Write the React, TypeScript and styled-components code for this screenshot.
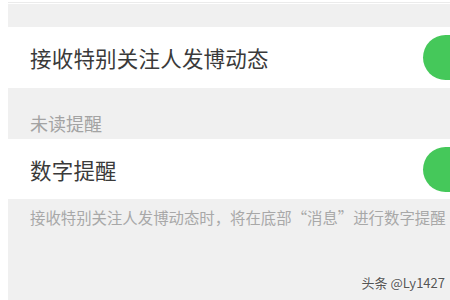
import React from "react";
import styled, { createGlobalStyle } from "styled-components";

const Global = createGlobalStyle`
  html, body {
    margin: 0;
    padding: 0;
    background: #ffffff;
    overflow: hidden;
  }
  body {
    font-family: "Noto Sans CJK SC", "Noto Sans", sans-serif;
    width: 450px;
    height: 300px;
  }
`;

const Screen = styled.div`
  position: relative;
  width: 450px;
  height: 300px;
  overflow: hidden;
  background: #ffffff;
`;

const Page = styled.div`
  margin-left: 8px;
  width: 480px;
  height: 300px;
  display: flex;
  flex-direction: column;
  background: #f0f0f0;
`;

const TopStrip = styled.div`
  height: 4px;
  background: #ffffff;
  border-top: 2px solid #ffffff;
  box-sizing: border-box;
  box-shadow: inset 0 1px 0 #ebebeb;
`;

const Spacer = styled.div<{ $h: number }>`
  height: ${(p) => p.$h}px;
  flex-shrink: 0;
`;

const Row = styled.div<{ $h: number }>`
  height: ${(p) => p.$h}px;
  flex-shrink: 0;
  background: #ffffff;
  display: flex;
  align-items: center;
  justify-content: space-between;
  padding-left: 22px;
  padding-right: 12px;
`;

const RowTitle = styled.span`
  font-size: 21.5px;
  color: #3a3a3a;
  letter-spacing: 0.2px;
`;

const Toggle = styled.div`
  width: 53px;
  height: 45px;
  border-radius: 23px;
  background: #45c85a;
`;

const SectionHeader = styled.div`
  height: 51px;
  flex-shrink: 0;
  display: flex;
  align-items: flex-end;
  padding-left: 22px;
  padding-bottom: 3px;
  box-sizing: border-box;
  font-size: 18px;
  color: #a3a3a3;
`;

const Note = styled.div`
  padding: 7px 0 0 22px;
  font-size: 15.4px;
  color: #a8a8a8;
  white-space: nowrap;
`;

const Watermark = styled.div`
  position: absolute;
  right: 5px;
  bottom: 8px;
  font-family: "Noto Sans CJK SC", "Liberation Sans", sans-serif;
  font-size: 13px;
  color: #555555;
  text-shadow: 0 0 2px #ffffff;
`;

export default function App() {
  return (
    <Screen>
      <Global />
      <Page>
        <TopStrip />
        <Spacer $h={23} />
        <Row $h={61}>
          <RowTitle>接收特别关注人发博动态</RowTitle>
          <Toggle />
        </Row>
        <SectionHeader>未读提醒</SectionHeader>
        <Row $h={60}>
          <RowTitle>数字提醒</RowTitle>
          <Toggle />
        </Row>
        <Note>接收特别关注人发博动态时，将在底部“消息”进行数字提醒</Note>
      </Page>
      <Watermark>头条 @Ly1427</Watermark>
    </Screen>
  );
}
